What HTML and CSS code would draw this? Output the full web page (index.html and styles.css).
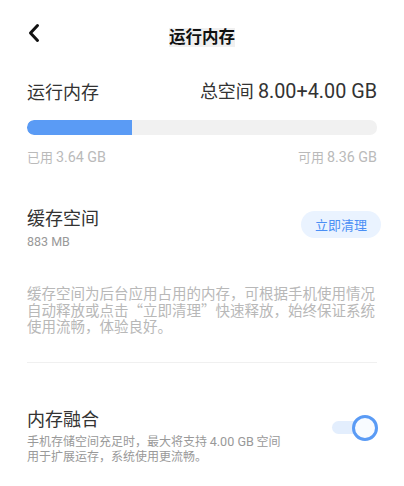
FILE: index.html
```html
<!DOCTYPE html>
<html lang="zh-CN">
<head>
    <meta charset="UTF-8">
    <meta name="viewport" content="width=device-width, initial-scale=1.0">
    <title>运行内存</title>
    <link rel="stylesheet" href="styles.css">
</head>
<body>
    <div class="topbar">
        <a class="back" href="#" aria-label="返回">
            <svg width="14" height="20" viewBox="0 0 14 20">
                <path d="M10.5 2.5 L3.5 10 L10.5 17.5" fill="none" stroke="#111" stroke-width="3" stroke-linecap="round" stroke-linejoin="round"/>
            </svg>
        </a>
        <h1 class="page-title">运行内存</h1>
        <span></span>
    </div>

    <section class="memory">
        <div class="memory-head">
            <span class="label">运行内存</span>
            <span class="total">总空间 <span class="num">8.00+4.00 GB</span></span>
        </div>
        <div class="bar">
            <div class="bar-fill" style="width: 30%"></div>
        </div>
        <div class="bar-caption">
            <span>已用 <span class="num">3.64 GB</span></span>
            <span>可用 <span class="num">8.36 GB</span></span>
        </div>
    </section>

    <section class="cache">
        <div class="row">
            <div>
                <div class="label">缓存空间</div>
                <div class="sub num">883 MB</div>
            </div>
            <button class="clean-btn">立即清理</button>
        </div>
        <p class="note">缓存空间为后台应用占用的内存，可根据手机使用情况自动释放或点击“立即清理”快速释放，始终保证系统使用流畅，体验良好。</p>
    </section>

    <hr class="divider">

    <section class="merge">
        <div class="row top">
            <div class="merge-text">
                <div class="label">内存融合</div>
                <div class="desc">手机存储空间充足时，最大将支持 <span class="num">4.00 GB</span> 空间<br>用于扩展运存，系统使用更流畅。</div>
            </div>
            <div class="switch on">
                <div class="switch-track"></div>
                <div class="switch-knob"></div>
            </div>
        </div>
    </section>
</body>
</html>
```

FILE: styles.css
```css
/* Reset */
* {
    margin: 0;
    padding: 0;
    box-sizing: border-box;
}

body {
    font-family: "Noto Sans CJK SC", sans-serif;
    background: #fff;
    color: #333;
    width: 404px;
}

.num {
    font-family: Roboto, "Noto Sans CJK SC", sans-serif;
    font-size: 1.1em;
}

/* Top bar */
.topbar {
    display: grid;
    grid-template-columns: 1fr auto 1fr;
    align-items: center;
    padding: 0 27px;
    height: 66px;
}

.back {
    display: flex;
    align-items: center;
}

.page-title {
    font-size: 16.5px;
    font-weight: 700;
    line-height: 17px;
    color: #111;
    background: #f0f0f0;
    padding: 0 0 2px;
    margin-top: 9px;
}

.label {
    font-size: 18px;
    line-height: 22px;
    color: #333;
}

/* Memory usage */
.memory {
    padding: 13px 27px 0;
}

.memory-head {
    display: flex;
    justify-content: space-between;
    align-items: center;
}

.total {
    font-size: 18px;
    line-height: 22px;
    color: #333;
}

.bar {
    margin-top: 17px;
    height: 15px;
    border-radius: 7px;
    background: #f1f1f1;
    overflow: hidden;
}

.bar-fill {
    height: 100%;
    background: #5a9bf5;
    border-radius: 7px 0 0 7px;
}

.bar-caption {
    display: flex;
    justify-content: space-between;
    margin-top: 14px;
    font-size: 13px;
    line-height: 16px;
    color: #bababa;
}

/* Cache */
.cache {
    padding: 41px 27px 0;
}

.row {
    display: flex;
    justify-content: space-between;
    align-items: center;
}

.row.top {
    align-items: flex-start;
}

.sub {
    margin-top: 6px;
    font-size: 12.5px;
    line-height: 16px;
    color: #999;
}

.clean-btn {
    border: none;
    background: #eaf3ff;
    color: #4a8ff5;
    font-family: inherit;
    font-size: 13px;
    height: 27px;
    width: 80px;
    border-radius: 14px;
    margin-right: -4px;
    margin-top: -8px;
}

.note {
    margin-top: 35px;
    font-size: 14.5px;
    line-height: 16.6px;
    color: #b8b8b8;
}

.divider {
    border: none;
    height: 1px;
    background: #f0f0f0;
    margin: 27px 27px 0;
}

/* Memory merge */
.merge {
    padding: 44px 27px 0;
}

.merge-text {
    width: 270px;
}

.desc {
    margin-top: 5px;
    font-size: 12px;
    line-height: 14px;
    color: #999;
}

.desc .num {
    font-size: 1.05em;
}

.switch {
    position: relative;
    width: 46px;
    height: 26px;
    margin-right: -1px;
    margin-top: 8px;
}

.switch-track {
    position: absolute;
    left: 0;
    top: 6px;
    width: 36px;
    height: 13px;
    border-radius: 7px;
    background: #e3eefd;
}

.switch-knob {
    position: absolute;
    right: 0;
    top: 0;
    width: 26px;
    height: 26px;
    border-radius: 50%;
    border: 3px solid #5a9bf5;
    background: #f8fbff;
}
```
